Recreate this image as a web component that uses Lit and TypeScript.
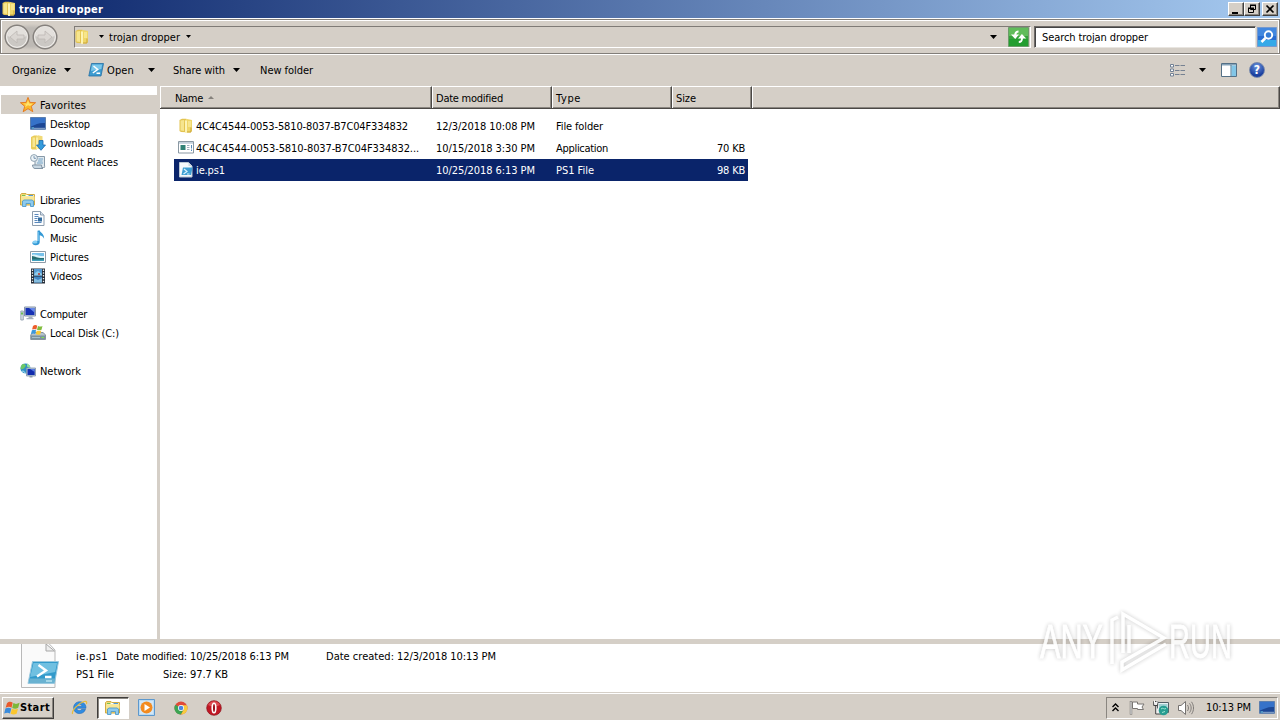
import { LitElement, html, css, svg, TemplateResult } from "lit";
import { customElement } from "lit/decorators.js";
import { styleMap } from "lit/directives/style-map.js";

const FAMILY = `Tahoma, "DejaVu Sans Condensed", "DejaVu Sans", sans-serif`;
const ctx = document.createElement("canvas").getContext("2d")!;

// Label set to a given advance width by tracking.
function label(text: string, width: number, cls = "", font = "11px") {
  ctx.font = `${font} ${FAMILY}`;
  const spacing = (width + 1 - ctx.measureText(text).width) / text.length;
  return html`<span class="t ${cls}" style=${styleMap({ letterSpacing: spacing.toFixed(3) + "px" })}>${text}</span>`;
}

const icon = (w: number, h: number, body: unknown, vb = `0 0 ${w} ${h}`) =>
  html`<svg class="i" width=${w} height=${h} viewBox=${vb}>${body}</svg>`;

const folder = () => icon(16, 16, svg`
  <path d="M1.500 2 4 .8h4.500v13.500L3 14l-1.500-1z" fill="#e3c350"/><path d="M2.500 2.500 6 2v11l-3.500-.5z" fill="#f6e58e"/>
  <path d="M6.500 2.500 9 1l5 1v10.500l-1.500 2H8z" fill="#efd668"/><path d="M8 2.500v12.500" stroke="#fdf3b4" stroke-width="2"/>
  <path d="M10 3h3v6h-3z" fill="#f7e58c"/><path d="M13 9.500v4.500H9" stroke="#cba638" fill="none"/>`);
const ps = () => icon(16, 16, svg`
  <path d="M3.500 1.500h12l-2.500 12.500H.8z" fill="#3c9bd0" stroke="#2470a4" stroke-width=".8"/>
  <path d="M4 2.500h10.200l-.9 4.500L3 9z" fill="#7cc7ea"/>
  <path d="m5.500 4 4.200 3.500L4.800 11M8.500 11.300h3.600" stroke="#fff" stroke-width="1.500" fill="none"/>`);
const star = () => icon(16, 16, svg`
  <path d="m8 .4 2 5 5.600.3-4.300 3.600 1.500 5.400L8 11.700l-4.800 3 1.500-5.400L.4 5.700 6 5.400z" fill="#fbb62b" stroke="#e4761b" stroke-width=".9"/>
  <path d="m8 3 1.200 3.400 3.800.3-3 2.300L8 8.300l-3 1.900.9-2.500L3 6.700l3.800-.3z" fill="#ffe26b"/>`);
const monitor = () => icon(16, 16, svg`
  <path d="M.5 1.500h15v11.800H.5z" fill="#1c4795" stroke="#5c7fae"/><path d="M1 2h14v5C9 6.500 6 8.500 1 10.500z" fill="#3672c9"/>
  <path d="M1.500 11.500h2.500v1h-2.500z" fill="#82e3ee"/><path d="M4 12.300h11" stroke="#8facce"/>`);
const download = () => icon(16, 16, svg`
  <path d="M1 2 4 .5h3v14H2l-1-1z" fill="#e9cc59"/><path d="M2.500 2.500H5V12H2.500z" fill="#f7e794"/><path d="M6 1.500 8 .3l4.500 1V14H7z" fill="#f1da78"/><path d="M7 2.500V14" stroke="#fff4b5" stroke-width="1.500"/>
  <path d="M9 5.500h4v4.500h2.500L11 15.300 6.500 10H9z" fill="#349bdc" stroke="#1b68ae" stroke-width=".8"/>`);
const recent = () => icon(16, 16, svg`
  <path d="M5 2.500h9.500V11c0 2 1 2.500-1 2.500H5z" fill="#dfe8ee" stroke="#8799a8"/><path d="M2.500 11h9c0 1 0 3 1.500 3.500H5c-1.500 0-2.500-1.500-2.500-3.500z" fill="#c9d8e3" stroke="#8395a5"/>
  <path d="M8.500 5H13M8 7h4.500M7 9h6" stroke="#72a3c7"/><circle cx="4" cy="4" r="3.400" fill="#edf4f8" stroke="#8fa2b1"/><path d="M4 2v2.300h2" stroke="#6080a0" fill="none" stroke-width=".8"/>`);
const library = () => icon(16, 16, svg`
  <path d="M.5 13V2.500l1-1H6l1 1h7.500V13z" fill="#f1d876" stroke="#d1aa43"/><path d="M2 3h11.500v1.500H2z" fill="#fff"/><path d="M2 3h3.500v1H2z" fill="#78c44f"/><path d="M8.500 3H13v1H8.500z" fill="#4c9ae0"/>
  <path d="M1 4.500h13.500v4H1z" fill="#f8e695"/><path d="M2.500 14.500V9l1.500-1h8l1.500 1v5.500h-3V11.500H6v3z" fill="#8dcaed" stroke="#519bcb" stroke-width=".9"/>`);
const doc = () => icon(16, 16, svg`
  <path d="M2.500.500h8l3.500 3.500V14.500h-11.500z" fill="#fbfdff" stroke="#8d9dae"/><path d="M10.500.500V4H14" fill="#d5e2ed" stroke="#8d9dae"/>
  <path d="M4.500 3.500h4M4.500 5.500h4M4.500 9.500h3M4.500 11.500h7M4.500 7.500h3" stroke="#5a88bd"/><path d="M8 6.500h4v4H8z" fill="#336c9f"/>`);
const music = () => icon(16, 16, svg`
  <path d="M7.500.7 9.500.3c.4 2.400 4.800 3 4.600 8.400-.8-2-2-2.800-4.400-3.500v7c0 1.700-1.800 3-4 3-4.600 0-4.200-4.500.1-4.500l1.700.2z" fill="#3399d5"/><ellipse cx="5" cy="12" rx="2.500" ry="1.600" fill="#87d0f4"/><path d="M8.500 2v9" stroke="#67b9e9"/>`);
const picture = () => icon(16, 16, svg`
  <path d="M.5 2.500h15v11H.5z" fill="#fff" stroke="#8e9ba7"/><path d="M2 4h12v8H2z" fill="#77c1ea"/><path d="M2 6c4-1.500 5 1.500 12 1v2H2z" fill="#dff4fb"/><path d="M2 7c4 .3 5 2.500 12 2v3H2z" fill="#276e72"/><path d="M2 10.500h12v1.500H2z" fill="#40a1bd"/>`);
const video = () => icon(16, 16, svg`
  <path d="M1 .5h14v15H1z" fill="#252d38"/><path d="M4 1h8v6.500H4z" fill="#559bd4"/><path d="M4 8.500h8v6H4z" fill="#3f85c4"/><path d="m5 5 3-2 4 3v1.500H4z" fill="#90cbe9"/><path d="m4 10 4 2 4-2v4.500H4z" fill="#85bddf"/><path d="M8 5h2v2H8z" fill="#b25757"/>
  <path d="M2.500 1.500v13.500M13.500 1.500v13.500" stroke="#eee" stroke-width="1.300" stroke-dasharray="1.400 1.400"/>`);
const computer = () => icon(16, 16, svg`
  <path d="M4.500 1h11v9h-11z" fill="#c6d1df" stroke="#8795a8"/><path d="M5.500 2h9v7h-9z" fill="#1631b4"/><path d="M9 2h5.500v4.500z" fill="#6689e9"/><path d="M8.500 10.500h4v1.500h-4zM6.500 12h7v1.300h-7z" fill="#a5afbd"/><path d="M.8 5h2.500v9H.8z" fill="#d7dee5" stroke="#8998a8" stroke-width=".8"/><path d="M1 6.500h2v2H1z" fill="#69bd54"/>`);
const disk = () => icon(16, 16, svg`
  <path d="m.7 10 2-2.500h10.500l2.300 2.500v4.500H.7z" fill="#b4c2cd" stroke="#71808b" stroke-width=".8"/><path d="M1 10.500h14V14H1z" fill="#7b929f"/><path d="M2 12.500h8" stroke="#a9c0ca"/><path d="M11.500 12.500h2.500" stroke="#81e44c"/>
  <path d="M3 .9C4.600-.3 6-.1 7.300.7L6.300 4.500c-1.300-.7-2.600-.7-4.200 0z" fill="#ed5d2b"/><path d="M8 1c1.500.8 3 .8 4.500 0l-1 3.800c-1.500.8-3 .7-4.500-.1z" fill="#81bd3d"/><path d="M1.900 5.200c1.500-.8 2.900-.7 4.200 0l-1 3.700c-1.300-.7-2.600-.7-4.200 0z" fill="#3b98dc"/><path d="M6.800 5.400c1.500.8 3 .8 4.500.1l-1 3.700c-1.500.8-3 .7-4.500-.1z" fill="#fac934"/>`);
const network = () => icon(16, 16, svg`
  <circle cx="5.500" cy="5.500" r="5" fill="#2e8fc6"/><path d="M2 1.500c2-1 3 0 4 1l-2 3-3 1c-.8-2 0-4 1-5z" fill="#6cc867"/><path d="m7 .6 3 2v3l-3-2z" fill="#90dd9c"/><path d="M1.500 8.500c2-1 3 0 4 2" stroke="#b6e6f2" fill="none"/>
  <path d="M6.500 5h9v8h-9z" fill="#b8c8db" stroke="#8394a8" stroke-width=".8"/><path d="M7.500 6h7.200v6H7.500z" fill="#122cae"/><path d="M10 6h4.700v3z" fill="#587de3"/><path d="M9.500 13h3v1.500h-3z" fill="#8d9bab"/>`);
const app = () => icon(16, 16, svg`
  <path d="M.5 1.500h15v11.500H.5z" fill="#fff" stroke="#8a98a3"/><path d="M1 2h14v1.800H1z" fill="#c3d1dc"/><path d="M2.500 5h5v5h-5z" fill="#318276"/><path d="M9 5.500h2.500M9 7.500h2.500M9 9.500h2.500" stroke="#9eb0bd"/><path d="M13.500 5v3.500M13.500 9.500v1.500" stroke="#568bb9"/>`);
const psFile = () => icon(16, 16, svg`
  <path d="M1.500.5h9L14 4v11H1.500z" fill="#f5f8fb" stroke="#b9c6d2"/><path d="M10.500.5V4H14" fill="#cbd7e1"/><path d="M5 5.500h9.500l-1.500 7.500H3.500z" fill="#3f9fd3"/><path d="m6 7 3 2.500L5.500 12M9 12h2.500" stroke="#d9f3ff" fill="none" stroke-width="1.200"/>`);
const psFileLarge = () => icon(40, 46, svg`
  <path d="M1.500-3h25l8.500 9v37.500H1.500z" fill="#fafafa" stroke="#b9b9b9"/><path d="M26 0v7h8.500z" fill="#eee" stroke="#a7a7a7"/>
  <path d="M12.500 17.500H38.500L34.500 39.500H8z" fill="#329acb" stroke="#9ac9df"/><path d="M13.500 19h23.500l-1.800 9-25 5z" fill="#70c0e1"/><path d="M9.500 34.500h25.500l-.8 4.500H9z" fill="#69b2d1"/>
  <path d="m18.500 21 7.500 5.500-9 6M25 33h6.500" stroke="#fff" fill="none" stroke-width="2.400"/><path d="M26 37h6" stroke="#b8e3ef" stroke-width="1.500"/>`);
const caret = (cls = "") => html`<svg class="i ${cls}" width="7" height="4" viewBox="0 0 7 4"><path d="M0 0h7L3.500 4z" fill="#000"/></svg>`;
const smallCaret = () => icon(5, 3, svg`<path d="M0 0h5L2.500 3z"/>`);
const navBall = (back: boolean) => icon(26, 26, svg`
  <circle cx="13" cy="13" r="11.800" fill="#d4d0cb" stroke="#85817d" stroke-width="1.400"/><circle cx="13" cy="13" r="10.300" fill="#cbc8c4" stroke="#f2f0ed"/>
  <path d="M3.500 12a9.500 9.500 0 0 1 19 0c-5 2-14 2-19 0z" fill="#e3e0dc"/>
  <path d=${back ? "M20 11v4h-7v4l-7-6 7-6v4z" : "M6 11v4h7v4l7-6-7-6v4z"} fill="#dad6d2" stroke="#bcb8b4" stroke-width=".8"/>`);
const refresh = () => icon(21, 20, svg`
  <path d="M.5.500h20v19H.5z" fill="#36a13c" stroke="#6c9c6b"/><path d="M1 1h19v8H1z" fill="#61bc5b"/><path d="M1 12h19v7H1z" fill="#239e30"/>
  <path d="M10.500 4.500c-2.500 0-3.300 1-3.300 4" stroke="#fff" stroke-width="2" fill="none"/><path d="m3 7.500 4.200 4.500L11 7.500zM10 11.500l3.900-4.500 4.300 4.500z" fill="#fff"/><path d="M10.800 15c2.500 0 3.200-1 3.200-4" stroke="#fff" stroke-width="2" fill="none"/>`);
const searchIcon = () => icon(20, 20, svg`
  <path d="M.5.500h19v19H.5z" fill="#286cd2" stroke="#7599ce"/><path d="M1 1h18v8H1z" fill="#4287df"/><path d="M1 13h18v6H1z" fill="#35a9e8"/>
  <circle cx="11.500" cy="8" r="3.700" fill="#367bd5" stroke="#fff" stroke-width="1.900"/><path d="m8.500 11-4 4" stroke="#fff" stroke-width="2.500"/>`);
const views = () => icon(16, 13, svg`
  <path d="M.5.500h3v2.500h-3zM.5 5h3v2.500h-3zM.5 9.500h3v2.500h-3z" fill="#fff" stroke="#718094"/><path d="M5 1.500h4.500M10.500 1.500H15M5 6.500h4.500M10.500 6.500H15M5 10.500h4.500M10.500 10.500H15" stroke="#758191"/>`);
const preview = () => icon(16, 14, svg`
  <path d="M.5.500h15v13H.5z" fill="#fff" stroke="#547086"/><path d="M1 1h14v1.500H1z" fill="#85a2b8"/><path d="M10.500 2.500h4.500V13h-4.500z" fill="#82c6e7"/><path d="M10 2v11" stroke="#4b7895"/>`);
const help = () => html`<span class="help">?</span>`;
const flag = (s: number) => icon(s, s, svg`
  <path d="M3 2.300C5 .3 7 .5 8.700 1.800L7.500 6.700C5.800 5.500 4 5.700 1.600 6.700z" fill="#e9592b"/><path d="M9.400 2.100c2 1.200 3.500 1 6.200-.3L14.200 6.800c-2 1.200-4 1.200-6 .1z" fill="#7db737"/>
  <path d="M1.400 7.500c2-1.200 4-1 5.900 0L6 12.500c-1.700-1-3.400-1-5.800.1z" fill="#3a8bdb"/><path d="M7.900 7.800c2 1 3.900 1 6.100 0l-1.400 4.900c-2 1-4.100 1-6 0z" fill="#fbc62e"/>`, "0 0 16 14");
const ie = () => icon(17, 17, svg`
  <path d="M14.500 10.300h-3.800c-1.200 2.200-4.900 1.500-4.900-1H15C15.500.6 2.600.6 2.600 8.800c0 7.200 10.200 7.700 11.900 1.500zM5.900 7.200c.4-2.700 4.800-2.700 5 0z" fill="#2f8ce2" stroke="#1761b2" stroke-width=".5"/><path d="M1.500 15c-1-3 5-10.500 11.500-12.500 3-.8 3 1 2.400 2.500" fill="none" stroke="#e9bd3b" stroke-width="1.200"/>`);
const player = () => icon(17, 17, svg`
  <path d="M.5.500h16v16H.5z" fill="#b9daf3" stroke="#5d98cd"/><path d="M2 2h13v13H2z" fill="#d3e7f6"/><circle cx="8.500" cy="8.500" r="6" fill="#f38b20"/><path d="m6.500 5 5.500 3.500-5.500 3.500z" fill="#fff"/>`);
const chrome = () => icon(14, 14, svg`
  <circle cx="7" cy="7" r="6.500" fill="#e04a39"/><path d="M7 7 1.300 3.700A6.500 6.500 0 0 0 7 13.500L9.800 8.600z" fill="#3ca453"/><path d="M7 4.200h5.900A6.500 6.500 0 0 1 7 13.500l2.800-5z" fill="#f7cc3e"/><circle cx="7" cy="7" r="3" fill="#fff"/><circle cx="7" cy="7" r="2.300" fill="#4b86e0"/>`);
const opera = () => icon(16, 16, svg`
  <circle cx="8" cy="8" r="7.300" fill="#c11724" stroke="#8b111b" stroke-width=".7"/><path d="M2 5c3-5 9-5 12 0-4 2-8 2-12 0z" fill="#df4c52"/><ellipse cx="8" cy="8" rx="1.800" ry="4.700" fill="#9b101a" stroke="#fff" stroke-width="1.600"/>`);
const trayFlag = () => icon(16, 15, svg`
  <path d="M2 1v13.500" stroke="#6c6a68" stroke-width="2.400"/><path d="M2 1.500v12.500" stroke="#fff"/><path d="M3.500 2h5v2H15l-2 3 1.500 2.500H8.500V8.500h-5z" fill="#fff" stroke="#787572"/>`);
const trayNet = () => icon(16, 16, svg`
  <path d="M4.500 2.500h11v10h-11z" fill="#e9f0f2" stroke="#545f66"/><path d="M6 4h8.500v7H6z" fill="#9fd0d2"/><path d="M.7 1.500h4v4h-4zM2.700 5.500V14H8" fill="#eee" stroke="#444"/><path d="M1.500.500v3M4 .500v3" stroke="#fff"/><circle cx="10.500" cy="10.500" r="4.800" fill="#279d91"/><path d="M8 9c2-2 3 1 5-.5M9 12.500l3-1" stroke="#a0e6d2" fill="none"/>`);
const speaker = () => icon(17, 16, svg`
  <path d="M1.500 5.500H4L8.500 1.500v13L4 10.500H1.500z" fill="#fff" stroke="#74716f"/><path d="M10.500 5c1.300 2 1.300 4 0 6M12.500 3.300c2.200 3 2.200 6.400 0 9.400M14.500 1.800c2.700 4 2.700 8.400 0 12.400" fill="none" stroke="#777371" stroke-width=".9"/>`);

type Nav = { text: string; w: number; icon: () => TemplateResult; root?: boolean; selected?: boolean };
const groups: Nav[][] = [
  [
    { text: "Favorites", w: 45, icon: star, root: true, selected: true },
    { text: "Desktop", w: 39, icon: monitor },
    { text: "Downloads", w: 52, icon: download },
    { text: "Recent Places", w: 67, icon: recent },
  ],
  [
    { text: "Libraries", w: 39, icon: library, root: true },
    { text: "Documents", w: 53, icon: doc },
    { text: "Music", w: 26, icon: music },
    { text: "Pictures", w: 38, icon: picture },
    { text: "Videos", w: 31, icon: video },
  ],
  [
    { text: "Computer", w: 46, icon: computer, root: true },
    { text: "Local Disk (C:)", w: 68, icon: disk },
  ],
  [{ text: "Network", w: 40, icon: network, root: true }],
];

const files = [
  { icon: folder, name: "4C4C4544-0053-5810-8037-B7C04F334832", w: 211, date: "12/3/2018 10:08 PM", type: "File folder", tw: 46, size: "", sel: false },
  { icon: app, name: "4C4C4544-0053-5810-8037-B7C04F334832...", w: 222, date: "10/15/2018 3:30 PM", type: "Application", tw: 51, size: "70 KB", sel: false },
  { icon: psFile, name: "ie.ps1", w: 28, date: "10/25/2018 6:13 PM", type: "PS1 File", tw: 37, size: "98 KB", sel: true },
];

@customElement("app-root")
export class AppRoot extends LitElement {
  static styles = css`
    :host { display: flex; flex-direction: column; position: relative; width: 1280px; height: 720px; overflow: hidden; background: #fff; color: #000;
      font: 11px/14px Tahoma, "DejaVu Sans Condensed", "DejaVu Sans", sans-serif; box-sizing: border-box; }
    * { box-sizing: border-box; }
    .t { white-space: pre; flex: none; display: block; }
    .title .t, .path .t, .nav .t, .rows .t, .head .t { padding-top: 2px; }
    .i { display: block; flex: none; }
    .b { font-weight: bold; }
    .title { height: 18px; flex: none; display: flex; align-items: center; gap: 2px; padding: 0 2px 0 1px; color: #fff; background: linear-gradient(90deg, #0a246a, #a6caf0); }
    .winbtns { margin-left: auto; display: flex; }
    .wb { width: 16px; height: 14px; background: #d5cfc7; border: 1px solid; border-color: #fff #404040 #404040 #fff; box-shadow: inset -1px -1px #8a8680; display: flex; align-items: center; justify-content: center; }
    .wb.close { margin-left: 2px; }
    .addr { height: 35px; flex: none; background: #d5cfc7; border: 1px solid #827e79; box-shadow: inset 1px 1px #fff, inset -1px 0 #fff; display: flex; align-items: center; padding: 1px 1px 0 4px; margin-top: 1px; }
    .balls { display: flex; gap: 2px; background: radial-gradient(ellipse, #bdb9b4 50%, #d5cfc7 72%); border-radius: 13px; margin-left: -1px; }
    .path { margin-left: 16px; width: 957px; height: 22px; border: 1px solid; border-color: #7f7b76 #fff #fff #7f7b76; display: flex; align-items: center; padding: 0 33px 1px 0; }
    .path .t { margin: 0 6px 0 5px; }
    .path > .i:first-child { margin-left: -1px; }
    .path .first { margin-left: 9px; display: flex; }
    .path .last { margin-left: auto; }
    .reload { margin-left: -23px; }
    .search { margin-left: 5px; width: 222px; height: 22px; background: #fff; border: 1px solid; border-color: #6f6b67 #e8e5e0 #e8e5e0 #6f6b67; box-shadow: inset 1px 1px #444; padding: 4px 0 0 7px; margin-right: 1px; }
    .cmd { height: 32px; flex: none; background: #d5cfc7; border-top: 1px solid #fff; display: flex; align-items: center; padding: 0 15px 1px 12px; }
    .cmd .t { padding-top: 1px; }
    .cmd .m8 { margin-left: 8px; }
    .app { margin-left: 17px; }
    .opencaret { margin-left: 14px; }
    .share { margin-left: 18px; }
    .newf { margin-left: 20px; }
    .viewcaret { margin: 0 15px 0 13px; }
    .views { margin-left: auto; }
    .help { display: block; flex: none; width: 16px; height: 16px; border-radius: 50%; border: 1px solid #7688ac; background: radial-gradient(circle at 50% 25%, #6994de, #1b3f9f 70%); color: #fff; font: bold 12px/14px "DejaVu Sans Condensed", "DejaVu Sans", sans-serif; text-align: center; margin-left: 12px; }
    .main { height: 553px; flex: none; display: flex; }
    .nav { width: 157px; flex: none; padding-top: 9px; }
    .group { margin-bottom: 19px; }
    .item { height: 19px; display: flex; align-items: center; gap: 4px; padding-left: 30px; }
    .item.root { padding-left: 19px; margin-left: 1px; }
    .item.sel { background: #d5cfc7; }
    .split { width: 3px; flex: none; background: #d5cfc7; }
    .list { flex: 1; }
    .head { display: grid; grid-template-columns: 272px 120px 120px 80px 1fr; height: 23px; background: #d5cfc7; border-bottom: 1px solid #4b4845; }
    .h { border-right: 1px solid #4b4845; border-left: 1px solid #fff; border-top: 1px solid #fff; box-shadow: inset -1px -1px #8a8680; display: flex; align-items: center; padding-left: 3px; gap: 5px; }
    .h.n { padding-left: 14px; }
    .rows { margin: 6px 0 0 14px; width: 574px; }
    .row { height: 22px; display: grid; grid-template-columns: 262px 120px 120px 1fr; align-items: center; padding: 0 3px 0 0; }
    .row.sel { background: #0a246a; color: #fff; }
    .name { display: flex; align-items: center; gap: 2px; padding-left: 4px; }
    .size { justify-self: end; }
    .bar { height: 5px; flex: none; background: #d5cfc7; }
    .details { height: 48px; flex: none; display: flex; padding-left: 20px; }
    .info { margin: 6px 0 0 16px; display: flex; flex-direction: column; gap: 4px; }
    .line { display: flex; }
    .g8 { margin-left: 8px; }
    .g4 { margin-left: 3px; }
    .g37 { margin-left: 37px; }
    .g50 { margin-left: 49px; }
    .task { height: 28px; flex: none; background: #d5cfc7; border-top: 1px solid #d5cfc7; box-shadow: inset 0 1px #fff; display: flex; align-items: center; padding: 2px 2px 0 2px; }
    .start { width: 52px; height: 22px; border: 1px solid; border-color: #fff #3f3d3b #3f3d3b #fff; box-shadow: inset -1px -1px #8a8680; display: flex; align-items: center; padding-left: 1px; }
    .ql { display: flex; align-items: center; margin-left: 17px; }
    .active { width: 32px; height: 22px; background: #fff; border: 1px solid; border-color: #3f3d3b #fff #fff #3f3d3b; box-shadow: inset 1px 1px #8a8680; margin: 0 9px 0 9px; display: flex; align-items: center; justify-content: center; }
    .c1 { margin-left: 19px; }
    .c2 { margin-left: 18px; }
    .tray { margin-left: auto; width: 172px; height: 22px; border: 1px solid; border-color: #8a8680 #fff #fff #8a8680; display: flex; align-items: center; padding-left: 5px; }
    .tray .a { margin-left: 10px; }
    .tray .n { margin-left: 8px; }
    .tray .clock { margin: 0 8px 0 12px; }
    .mark { position: absolute; left: 1030px; top: 602px; overflow: visible; filter: drop-shadow(0 0 2px rgba(0, 0, 0, .25)); opacity: .88; }
    .mark text { font: 48px "Liberation Sans Narrow", "Liberation Sans", sans-serif; }
  `;

  render() {
    return html`
      <div class="title">
        ${folder()}${label("trojan dropper", 83, "b", "bold 11px")}
        <div class="winbtns">
          <span class="wb">${icon(12, 10, svg`<path d="M2 8h6v2H2z"/>`)}</span>
          <span class="wb">${icon(10, 10, svg`<path d="M3.500 1.500h5v4h-5zM1.500 4.500h5v4h-5z" fill="#d5cfc7" stroke="#000"/><path d="M3 .5h6v1.500H3zM1 3.500h6v1.500H1z"/>`)}</span>
          <span class="wb close">${icon(10, 10, svg`<path d="m1.500 1.500 7 7m0-7-7 7" stroke="#000" stroke-width="1.700"/>`)}</span>
        </div>
      </div>
      <div class="addr">
        <div class="balls">${navBall(true)}${navBall(false)}</div>
        <div class="path">
          ${folder()}<span class="first">${smallCaret()}</span>${label("trojan dropper", 70)}${smallCaret()}
          <span class="last">${caret()}</span>
        </div>
        <div class="reload">${refresh()}</div>
        <div class="search">${label("Search trojan dropper", 105)}</div>
        ${searchIcon()}
      </div>
      <div class="cmd">
        ${label("Organize", 43)}${caret("m8")}
        <span class="app">${ps()}</span>
        <span class="g4">${label("Open", 26)}</span><span class="opencaret">${caret()}</span>
        <span class="share">${label("Share with", 51)}</span>${caret("m8")}
        <span class="newf">${label("New folder", 52)}</span>
        <span class="views">${views()}</span>
        <span class="viewcaret">${caret()}</span>
        ${preview()}${help()}
      </div>
      <div class="main">
        <div class="nav">
          ${groups.map((g) => html`<div class="group">${g.map((n) => html`
            <div class="item ${n.root ? "root" : ""} ${n.selected ? "sel" : ""}">${n.icon()}${label(n.text, n.w)}</div>`)}</div>`)}
        </div>
        <div class="split"></div>
        <div class="list">
          <div class="head">
            <div class="h n">${label("Name", 27)}${icon(6, 3, svg`<path d="M0 3h6L3 0z" fill="#85817c"/>`)}</div>
            <div class="h">${label("Date modified", 66)}</div>
            <div class="h">${label("Type", 24)}</div>
            <div class="h">${label("Size", 19)}</div>
            <div class="h"></div>
          </div>
          <div class="rows">
            ${files.map((f) => html`<div class="row ${f.sel ? "sel" : ""}">
              <div class="name">${f.icon()}${label(f.name, f.w)}</div>
              ${label(f.date, 98)}${label(f.type, f.tw)}${f.size ? label(f.size, 27, "size") : ""}
            </div>`)}
          </div>
        </div>
      </div>
      <div class="bar"></div>
      <div class="details">
        ${psFileLarge()}
        <div class="info">
          <div class="line">${label("ie.ps1", 31, "", "11px")}<span class="g8">${label("Date modified:", 70)}</span><span class="g4">${label("10/25/2018 6:13 PM", 98)}</span>
            <span class="g37">${label("Date created:", 67)}</span><span class="g4">${label("12/3/2018 10:13 PM", 98)}</span></div>
          <div class="line">${label("PS1 File", 37)}<span class="g50">${label("Size:", 23)}</span><span class="g4">${label("97.7 KB", 37)}</span></div>
        </div>
      </div>
      <div class="task">
        <div class="start">${flag(16)}${label("Start", 29, "b", "bold 11px")}</div>
        <div class="ql">${ie()}<div class="active">${library()}</div>${player()}<span class="c1">${chrome()}</span><span class="c2">${opera()}</span></div>
        <div class="tray">
          ${icon(7, 9, svg`<path d="M.5 4 3.500 1l3 3M.5 8l3-3 3 3" fill="none" stroke="#000" stroke-width="1.400"/>`)}
          <span class="a">${trayFlag()}</span><span class="n">${trayNet()}</span><span class="n">${speaker()}</span>
          <span class="clock">${label("10:13 PM", 44)}</span>${monitor()}
        </div>
      </div>
      <svg class="mark" width="250" height="76" viewBox="0 0 250 76">
        <g fill="#fff" stroke="#fff" stroke-width=".8">
          <text x="10" y="56" textLength="63" lengthAdjust="spacingAndGlyphs">ANY</text>
          <text x="139" y="56" textLength="63" lengthAdjust="spacingAndGlyphs">RUN</text>
        </g>
        <path d="M88 15l-6 3v44M93 51V12l41 24-42 24v8l44-26M99 23v28" fill="none" stroke="#fff" stroke-width="3.500"/>
      </svg>
    `;
  }
}
